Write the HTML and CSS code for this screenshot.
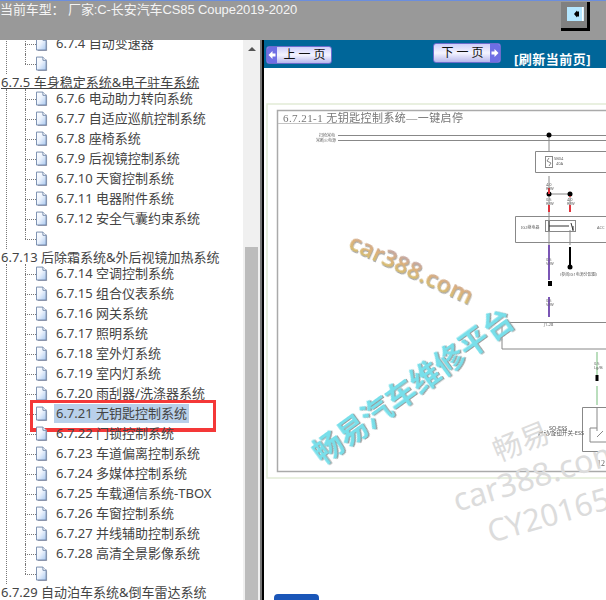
FILE: index.html
```html
<!DOCTYPE html>
<html lang="zh-CN">
<head>
  <meta charset="UTF-8">
  <title>维修手册</title>
  <link rel="stylesheet" href="styles.css">
</head>
<body>
  <svg class="defs" width="0" height="0">
    <defs>
      <linearGradient id="pageFill" x1="0" y1="0" x2="1" y2="1">
        <stop offset="0" stop-color="#ffffff"/>
        <stop offset=".45" stop-color="#eef4fd"/>
        <stop offset="1" stop-color="#a9c8f0"/>
      </linearGradient>
      <linearGradient id="tanFill" x1="0" y1="0" x2="0" y2="1">
        <stop offset="0" stop-color="#a59ad2"/>
        <stop offset=".5" stop-color="#dcb07c"/>
        <stop offset="1" stop-color="#d2c668"/>
      </linearGradient>
      <symbol id="page" viewBox="0 0 13 16">
        <path d="M2 2.500h9l1 3v10H2z" fill="#a4a4b0"/>
        <path d="M.5.5h7l3.500 3.500v10.500H.5z" fill="url(#pageFill)" stroke="#6f86a8"/>
        <path d="M7.500.5v3.500h3.500" fill="#fff" stroke="#6f86a8"/>
      </symbol>
    </defs>
  </svg>

  <header class="topbar">
    <p class="car-model">当前车型： 厂家:C-长安汽车CS85 Coupe2019-2020</p>
    <button class="toggle" type="button">
      <svg class="toggle-face" width="17" height="14" viewBox="0 0 17 14">
        <rect width="17" height="14" fill="#b4e6ff"/>
        <rect x="15" width="1.500" height="14" fill="#fff"/>
        <path d="M7 7l3-3.500v7z M10 4.500h2v5h-2z" fill="#000"/>
      </svg>
    </button>
  </header>

  <main class="main">
    <aside class="sidebar">
      <nav class="tree">
        <ul class="group">
          <li class="leaf"><i class="stub"></i><svg class="page"><use href="#page"/></svg><a class="label">6.7.4 自动变速器</a></li>
          <li class="leaf"><i class="stub"></i><svg class="page"><use href="#page"/></svg></li>
        </ul>
        <a class="heading hover">6.7.5 车身稳定系统&amp;电子驻车系统</a>
        <ul class="group">
          <li class="leaf"><i class="stub"></i><svg class="page"><use href="#page"/></svg><a class="label">6.7.6 电动助力转向系统</a></li>
          <li class="leaf"><i class="stub"></i><svg class="page"><use href="#page"/></svg><a class="label">6.7.7 自适应巡航控制系统</a></li>
          <li class="leaf"><i class="stub"></i><svg class="page"><use href="#page"/></svg><a class="label">6.7.8 座椅系统</a></li>
          <li class="leaf"><i class="stub"></i><svg class="page"><use href="#page"/></svg><a class="label">6.7.9 后视镜控制系统</a></li>
          <li class="leaf"><i class="stub"></i><svg class="page"><use href="#page"/></svg><a class="label">6.7.10 天窗控制系统</a></li>
          <li class="leaf"><i class="stub"></i><svg class="page"><use href="#page"/></svg><a class="label">6.7.11 电器附件系统</a></li>
          <li class="leaf"><i class="stub"></i><svg class="page"><use href="#page"/></svg><a class="label">6.7.12 安全气囊约束系统</a></li>
          <li class="leaf"><i class="stub"></i><svg class="page"><use href="#page"/></svg></li>
        </ul>
        <a class="heading">6.7.13 后除霜系统&amp;外后视镜加热系统</a>
        <ul class="group">
          <li class="leaf"><i class="stub"></i><svg class="page"><use href="#page"/></svg><a class="label">6.7.14 空调控制系统</a></li>
          <li class="leaf"><i class="stub"></i><svg class="page"><use href="#page"/></svg><a class="label">6.7.15 组合仪表系统</a></li>
          <li class="leaf"><i class="stub"></i><svg class="page"><use href="#page"/></svg><a class="label">6.7.16 网关系统</a></li>
          <li class="leaf"><i class="stub"></i><svg class="page"><use href="#page"/></svg><a class="label">6.7.17 照明系统</a></li>
          <li class="leaf"><i class="stub"></i><svg class="page"><use href="#page"/></svg><a class="label">6.7.18 室外灯系统</a></li>
          <li class="leaf"><i class="stub"></i><svg class="page"><use href="#page"/></svg><a class="label">6.7.19 室内灯系统</a></li>
          <li class="leaf"><i class="stub"></i><svg class="page"><use href="#page"/></svg><a class="label">6.7.20 雨刮器/洗涤器系统</a></li>
          <li class="leaf"><i class="stub"></i><svg class="page"><use href="#page"/></svg><a class="label selected">6.7.21 无钥匙控制系统</a><span class="red-mark"></span></li>
          <li class="leaf"><i class="stub"></i><svg class="page"><use href="#page"/></svg><a class="label">6.7.22 门锁控制系统</a></li>
          <li class="leaf"><i class="stub"></i><svg class="page"><use href="#page"/></svg><a class="label">6.7.23 车道偏离控制系统</a></li>
          <li class="leaf"><i class="stub"></i><svg class="page"><use href="#page"/></svg><a class="label">6.7.24 多媒体控制系统</a></li>
          <li class="leaf"><i class="stub"></i><svg class="page"><use href="#page"/></svg><a class="label">6.7.25 车载通信系统-TBOX</a></li>
          <li class="leaf"><i class="stub"></i><svg class="page"><use href="#page"/></svg><a class="label">6.7.26 车窗控制系统</a></li>
          <li class="leaf"><i class="stub"></i><svg class="page"><use href="#page"/></svg><a class="label">6.7.27 并线辅助控制系统</a></li>
          <li class="leaf"><i class="stub"></i><svg class="page"><use href="#page"/></svg><a class="label">6.7.28 高清全景影像系统</a></li>
          <li class="leaf"><i class="stub"></i><svg class="page"><use href="#page"/></svg></li>
        </ul>
        <a class="heading">6.7.29 自动泊车系统&amp;倒车雷达系统</a>
      </nav>
      <div class="scrollbar">
        <span class="scroll-up"></span>
        <span class="scroll-thumb"></span>
      </div>
    </aside>

    <div class="divider"></div>

    <section class="content">
      <div class="toolbar">
        <button class="page-btn prev" type="button">
          <svg class="arrow" width="10" height="16" viewBox="0 0 10 16"><path d="M1.500 8l4-4v2.500h3v3h-3V12z" fill="#fff"/></svg>
          <span class="btn-text">上一页</span>
        </button>
        <button class="page-btn next" type="button">
          <span class="btn-text">下一页</span>
          <svg class="arrow" width="10" height="16" viewBox="0 0 10 16"><path d="M8.500 8l-4-4v2.500h-3v3h3V12z" fill="#fff"/></svg>
        </button>
        <a class="refresh">[刷新当前页]</a>
      </div>

      <!-- viewBox uses the window's own coordinates, so the wiring can be read off the screenshot -->
      <svg class="diagram" width="342" height="526" viewBox="264 68 342 526">
        <g class="soft">
          <path class="frame-pale" d="M606 104H267V478H606"/>
          <path class="frame" d="M606 110.500H277.500V471.500H606"/>
          <path class="tab" d="M278 123.500H388V110"/>
          <text class="drawing-title" x="283" y="122" textLength="180">6.7.21-1 无钥匙控制系统—一键启停</text>

          <text class="tiny" x="319" y="137">扫枪常电</text>
          <text class="tiny" x="316" y="142">常断火电源</text>
          <path class="wire" d="M338 135.500H606M338 140.500H606M549 135V151M549 176V245M549 194H570V212M570 230V245"/>
          <path class="wire" d="M535.500 151.500H606M535.500 151.500V172.500H606M515.500 216.500H606M515.500 216.500V242.500H606M502 322.500H606M502 322.500V349H606"/>
          <rect class="wire" x="545.500" y="156.500" width="7" height="11"/>
          <path class="wire" d="M549 158l-2 3l4 2l-2 3"/>
          <text class="tiny" x="554" y="160">SB04</text>
          <text class="tiny" x="556" y="165">40A</text>
          <circle cx="549" cy="135" r="2.500"/>
          <circle cx="549" cy="194" r="2.500"/>
          <circle cx="570" cy="194" r="2.500"/>
          <path class="wire-red" d="M549 188V194M549 205V212M570 196V197M570 205V212"/>
          <text class="tiny" x="546" y="186">4.0</text>
          <text class="tiny" x="546" y="190">R/W</text>
          <text class="tiny" x="546" y="201">0.5</text>
          <text class="tiny" x="546" y="205">R/W</text>
          <text class="tiny" x="567" y="201">4.0</text>
          <text class="tiny" x="567" y="205">R/W</text>

          <rect class="wire" x="545.500" y="220.500" width="30" height="11"/>
          <path class="wire-dark" d="M549 221V231M549 226H569M571 223L573 230M573 226V231"/>
          <text class="tiny" x="521" y="229">IG2继电器</text>
          <text class="tiny" x="597" y="229">ACC</text>

          <path class="wire-purple" d="M549 245V280M549 297V317"/>
          <path class="wire-black" d="M570 247V268"/>
          <rect x="548" y="281" width="4" height="5"/>
          <circle cx="570" cy="267" r="2.500"/>
          <text class="tiny" x="546" y="261">0.5</text>
          <text class="tiny" x="546" y="265">V/W</text>
          <text class="tiny" x="546" y="302">0.5</text>
          <text class="tiny" x="546" y="306">V/W</text>
          <text class="tiny" x="560" y="276">(参阅IG1电源分配图)</text>
          <text class="tiny" x="544" y="326">J1-28</text>

          <path class="wire-green" d="M597 352V377M597 386V405"/>
          <rect x="595.500" y="375" width="3" height="6"/>
          <text class="tiny" x="594" y="365">0.5</text>
          <text class="tiny" x="594" y="369">Lg/B</text>
          <path class="wire" d="M582.500 407.500H606M582.500 407.500V451.500H606M597 408V428M597 428H590V442H606M597 428V431M597 437L603 431"/>
          <text class="tiny-dark" x="549" y="430">SO-ESS</text>
          <text class="tiny-dark" x="538" y="435">启动/旋钮开关-ESS</text>
          <text class="serial" x="597" y="466">12</text>
        </g>

        <text class="mark-tan" transform="translate(347 248) rotate(25)">car388.com</text>
        <text class="mark-cyan" transform="translate(322 465) rotate(-36)" textLength="240">畅易汽车维修平台</text>
        <text class="mark-gray mark-cn" transform="translate(498 462) rotate(-22)">畅易</text>
        <text class="mark-gray" transform="translate(457 512) rotate(-17)">car388.com</text>
        <text class="mark-gray mark-id" transform="translate(491 543) rotate(-16)">CY20165</text>
      </svg>

      <button class="bottom-btn" type="button"></button>
    </section>
  </main>
</body>
</html>
```

FILE: styles.css
```css
* {
  margin: 0;
  padding: 0;
  box-sizing: border-box;
  font-family: "Noto Sans", "Noto Sans CJK SC", sans-serif;
}

html, body {
  width: 606px;
  height: 600px;
  overflow: hidden;
  background: #fff;
}

body {
  display: flex;
  flex-direction: column;
}

.defs {
  display: block;
  height: 0;
}

/* top bar */
.topbar {
  height: 40px;
  flex: none;
  display: flex;
  justify-content: space-between;
  align-items: flex-start;
  background: #999;
  border-top: 1px solid #6b8ede;
  padding-right: 16px;
}

.car-model {
  color: #f4f4f4;
  font-family: "Liberation Sans", "Noto Sans CJK SC", sans-serif;
  font-size: 13px;
  line-height: 16px;
  letter-spacing: -.1px;
  padding-top: 1px;
  white-space: nowrap;
}

.toggle {
  width: 29px;
  height: 29px;
  margin-top: 1px;
  display: flex;
  padding: 5px 0 0 6px;
  background: #808080;
  border: none;
  border-right: 3px solid #000;
  border-bottom: 3px solid #000;
}

.toggle-face {
  display: block;
}

/* main split */
.main {
  flex: 1;
  display: flex;
  min-height: 0;
}

.sidebar {
  width: 260px;
  flex: none;
  display: flex;
}

.tree {
  flex: 1;
  overflow: hidden;
  color: #444;
  font-size: 13px;
}

.tree > :first-child {
  margin-top: -6px;
}

.group {
  list-style: none;
  margin-left: 6px;
  padding-left: 1px;
  border-left: 1px dotted #777;
}

.leaf {
  position: relative;
  display: flex;
  align-items: center;
  height: 20px;
  margin-left: 17px;
  white-space: nowrap;
}

.leaf::before {
  content: "";
  position: absolute;
  left: 0;
  top: 0;
  bottom: 0;
  border-left: 1px dotted #777;
}

.leaf:last-child::before {
  bottom: 50%;
}

.stub {
  width: 11px;
  flex: none;
  border-top: 1px dotted #777;
}

.page {
  width: 12px;
  height: 16px;
  flex: none;
}

.label {
  margin: -1px 0 0 6px;
  padding: 0 2px 1px;
  line-height: 18px;
}

.label.selected {
  background: #b9d0ea;
}

.heading {
  display: block;
  height: 15px;
  line-height: 16px;
  margin-left: 1px;
  white-space: nowrap;
}

.heading.hover {
  text-decoration: underline;
}

.red-mark {
  position: absolute;
  left: 5px;
  top: -4px;
  width: 186px;
  height: 32px;
  border: 3px solid #f43838;
  border-bottom-width: 4px;
}

.scrollbar {
  width: 17px;
  flex: none;
  display: flex;
  flex-direction: column;
  align-items: center;
  background: #f0f0f0;
}

.scroll-up {
  margin-top: 7px;
  border-left: 4px solid transparent;
  border-right: 4px solid transparent;
  border-bottom: 4px solid #555;
}

.scroll-thumb {
  width: 13px;
  flex: 1;
  margin-top: 196px;
  background: #bcbcbc;
}

.divider {
  width: 4px;
  flex: none;
  border-left: 2px solid #777;
  background: #000;
}

/* right pane */
.content {
  flex: 1;
  min-width: 0;
  overflow: hidden;
}

.toolbar {
  height: 28px;
  display: flex;
  align-items: flex-start;
  padding-left: 2px;
  background: #006699;
}

.page-btn {
  width: 66px;
  height: 18px;
  display: flex;
  align-items: center;
  border: 1px solid #6c6ccc;
  border-radius: 3px;
  background: linear-gradient(#cfcffa, #f4f4ff 50%, #b8b8ec);
  overflow: hidden;
}

.page-btn.prev {
  margin-top: 6px;
}

.page-btn.next {
  width: 68px;
  height: 20px;
  margin-top: 3px;
  margin-left: 101px;
}

.arrow {
  width: 10px;
  height: 100%;
  flex: none;
  background: #6e6ee4;
}

.btn-text {
  flex: 1;
  text-align: center;
  color: #111;
  font-size: 12px;
  line-height: 14px;
  letter-spacing: 3px;
  padding-left: 4px;
}

.refresh {
  margin-left: 13px;
  margin-top: 10px;
  color: #fff;
  font-size: 13px;
  line-height: 18px;
  font-weight: 700;
  letter-spacing: .5px;
  white-space: nowrap;
}

.diagram {
  display: block;
}

.soft {
  filter: blur(.35px);
}

.frame-pale {
  fill: none;
  stroke: #e2ebd6;
  stroke-width: 1.500;
}

.frame {
  fill: none;
  stroke: #aaa;
  stroke-width: 1.500;
}

.tab {
  fill: none;
  stroke: #c4c4c4;
}

.drawing-title {
  font-family: "Liberation Serif", "Noto Sans CJK SC", serif;
  font-size: 11px;
  fill: #777;
}

.tiny {
  font-size: 4px;
  fill: #666;
}

.tiny-dark {
  font-size: 5.500px;
  fill: #555;
}

.serial {
  font-family: "Liberation Serif", serif;
  font-size: 8px;
  fill: #666;
}

.wire {
  fill: none;
  stroke: #888;
}

.wire-dark {
  fill: none;
  stroke: #333;
}

.wire-red {
  fill: none;
  stroke: #e0343c;
  stroke-width: 2;
}

.wire-purple {
  fill: none;
  stroke: #7a55b5;
  stroke-width: 2;
}

.wire-black {
  fill: none;
  stroke: #000;
  stroke-width: 2;
}

.wire-green {
  fill: none;
  stroke: #a4d4a8;
  stroke-width: 1.500;
}

.mark-tan {
  font-size: 24px;
  font-weight: 600;
  fill: url(#tanFill);
  filter: drop-shadow(1px 1px 0 #aaa);
}

.mark-cyan {
  font-size: 30px;
  font-weight: 700;
  fill: #78dfea;
  filter: drop-shadow(1px 1px 0 #999);
}

.mark-gray {
  font-size: 32px;
  fill: #dcdcdc;
}

.mark-id {
  font-size: 31px;
}

.mark-cn {
  font-size: 29px;
}

.bottom-btn {
  display: block;
  width: 45px;
  height: 20px;
  margin-left: 10px;
  border: none;
  border-radius: 4px 4px 0 0;
  background: #1a56b8;
}
```
